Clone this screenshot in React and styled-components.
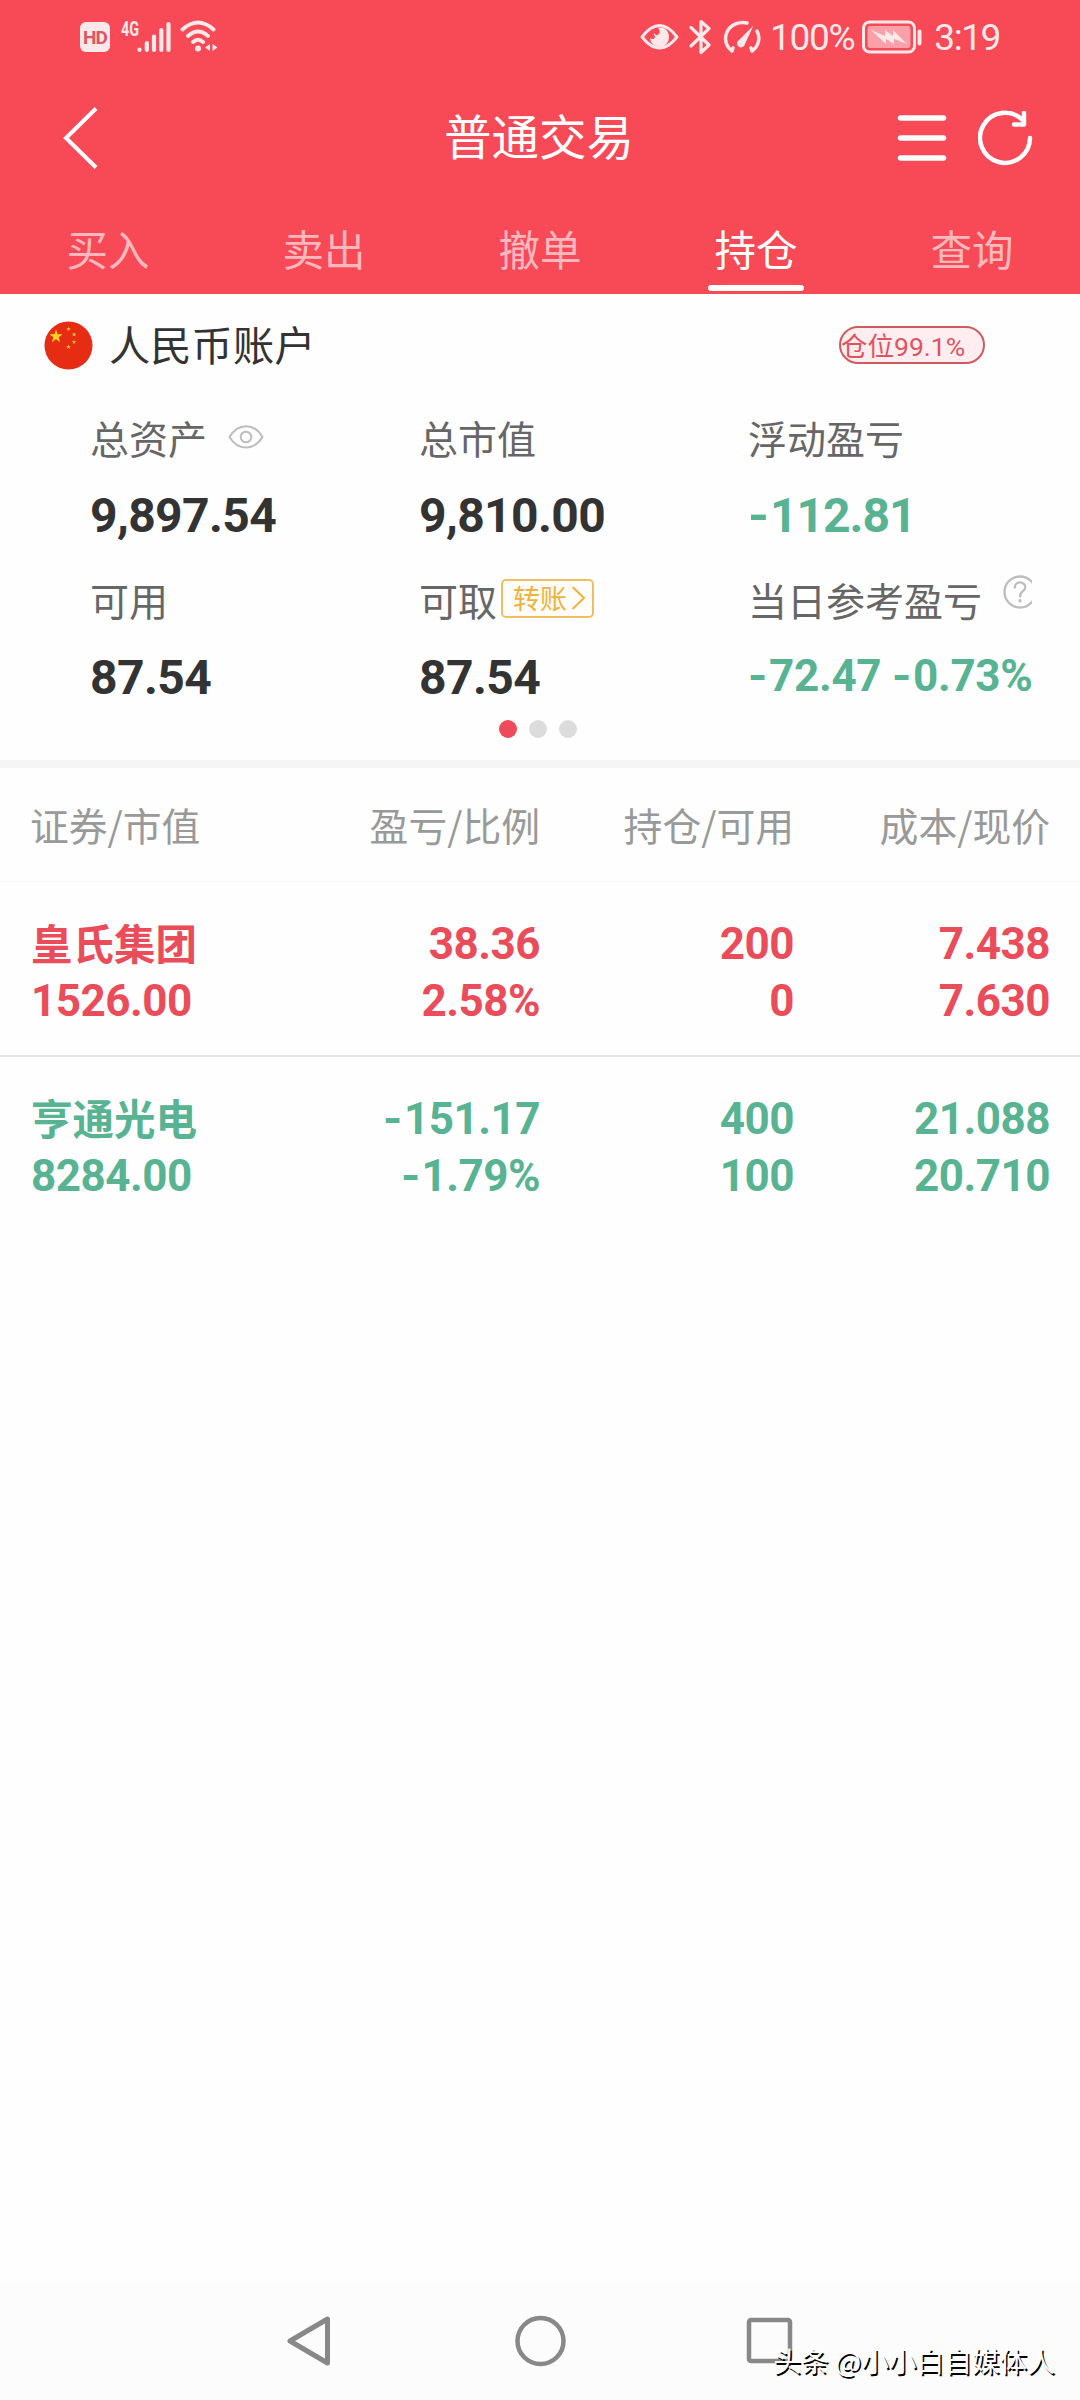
import React from "react";
import styled, { createGlobalStyle } from "styled-components";

const cjk = `"Noto Sans CJK SC", "Noto Sans", sans-serif`;
const latin = `Roboto, "Noto Sans CJK SC", sans-serif`;
const RED = "#ea4c5a";
const GREEN = "#57b391";

const GlobalStyle = createGlobalStyle`
  * { box-sizing: border-box; }
  body { margin: 0; background: #fefefe; font-family: ${cjk}; }
  svg { display: block; flex: none; }
`;

const Screen = styled.div`
  width: 1080px;
  height: 2400px;
  display: flex;
  flex-direction: column;
  background: #fefefe;
  overflow: hidden;
`;

const TopArea = styled.header`
  height: 294px;
  background: #f74956;
  color: #fff;
`;

const StatusBar = styled.div`
  height: 76px;
  padding: 0 80px 4px 80px;
  display: flex;
  align-items: center;
  color: #ffe8ea;
`;

const HdBadge = styled.span`
  width: 30px;
  height: 30px;
  margin: 2px 11px 0 0;
  border-radius: 6px;
  background: #ffe8ea;
  color: #dd5562;
  font: 700 19px/31px ${latin};
  letter-spacing: -1px;
  text-align: center;
`;

const NetworkType = styled.span`
  width: 16px;
  margin-top: -15px;
  font: 700 20px/18px ${latin};
  transform: scaleX(0.72);
  transform-origin: left;
`;

const IconGroup = styled.div`
  display: flex;
  align-items: center;
  gap: 9px;
  margin-top: 1px;
`;

const StatusRight = styled.div`
  margin-left: auto;
  display: flex;
  align-items: center;
`;

const StatusIcon = styled.span`
  margin: 1px ${(p) => p.$after || 0}px 0 0;
`;

const StatusText = styled.span`
  font: 400 37px/40px ${latin};
  letter-spacing: ${(p) => p.$spacing || 0}px;
  margin-top: 4px;
  margin-right: ${(p) => p.$after || 0}px;
`;

const TitleBar = styled.div`
  height: 124px;
  display: grid;
  grid-template-columns: 1fr 240px 1fr;
  align-items: center;
  padding: 0 46px 0 62px;
`;

const Title = styled.h1`
  margin: -7px 0 0 -18px;
  width: 240px;
  text-align: center;
  font: 400 47.5px/60px ${cjk};
  white-space: nowrap;
  justify-self: center;
`;

const Actions = styled.div`
  display: flex;
  justify-content: flex-end;
  gap: 31px;
`;

const Tabs = styled.nav`
  height: 94px;
  display: grid;
  grid-template-columns: repeat(5, 1fr);
`;

const Tab = styled.div`
  display: flex;
  flex-direction: column;
  align-items: center;
  justify-content: space-between;
  padding: 18px 0 3px;
  color: ${(p) => (p.$active ? "#fff" : "#ffb8be")};
  font: 400 41.5px/60px ${cjk};
  &::after {
    content: "";
    width: 96px;
    height: 6px;
    border-radius: 3px;
    background: ${(p) => (p.$active ? "#fff" : "transparent")};
  }
`;

const Summary = styled.section`
  height: 466px;
  display: flex;
  flex-direction: column;
`;

const AccountRow = styled.div`
  height: 102px;
  padding: 0 95px 0 44px;
  display: flex;
  align-items: center;
`;

const AccountName = styled.span`
  margin: -4px auto 0 16px;
  color: #333;
  font: 400 41.3px/56px ${cjk};
`;

const PositionBadge = styled.span`
  width: 146px;
  height: 38px;
  border: 2px solid #cf5a60;
  border-radius: 19px;
  background: #ffedef;
  color: #e2525f;
  font: 400 26.5px/37px ${latin};
  white-space: nowrap;
`;

const Metrics = styled.div`
  display: grid;
  grid-template-columns: 329px 329px 284px;
  padding-left: 90px;
  row-gap: 6px;
`;

const Metric = styled.div`
  height: 156px;
  overflow: hidden;
`;

const MetricLabel = styled.div`
  height: 83px;
  display: flex;
  align-items: center;
  color: #666;
  font: 400 39px/56px ${cjk};
  white-space: nowrap;
`;

const LabelText = styled.span`
  margin-top: -1px;
`;

const MetricValue = styled.div`
  height: 73px;
  color: ${(p) => p.$color || "#333"};
  font: 700 ${(p) => p.$size || 48}px/${(p) => (p.$size ? 70 : 74)}px ${latin};
  letter-spacing: ${(p) => p.$spacing ?? -0.6}px;
  white-space: nowrap;
`;

const EyeSlot = styled.span`
  margin: -1px 0 0 21px;
`;

const HelpSlot = styled.span`
  margin: -15px 0 0 21px;
`;

const TransferButton = styled.button`
  width: 93px;
  height: 39px;
  margin: -3px 0 0 4px;
  padding: 0 6px 0 10px;
  display: flex;
  align-items: center;
  justify-content: space-between;
  border: 2px solid #f0be62;
  border-radius: 5px;
  background: #fffdf9;
  color: #edb33c;
  font: 400 27px/32px ${cjk};
`;

const Dots = styled.div`
  display: flex;
  justify-content: center;
  gap: 12px;
  margin: 6px 4px 0 0;
`;

const Dot = styled.i`
  width: 18px;
  height: 18px;
  border-radius: 50%;
  background: ${(p) => (p.$active ? "#ef4a5a" : "#dcdcdc")};
`;

const Divider = styled.div`
  height: 8px;
  background: #f5f5f5;
`;

const row = `
  display: grid;
  grid-template-columns: 255px 254px 254px 256px;
  padding: 0 30px 0 31px;
`;

const TableHead = styled.div`
  ${row}
  height: 114px;
  align-items: center;
  border-bottom: 1px solid #fafafa;
  color: #999;
  font: 400 38.8px/56px ${cjk};
`;

const HeadCell = styled.span`
  margin: -1px 0 0 ${(p) => (p.$left ? "-1px" : 0)};
  text-align: ${(p) => (p.$left ? "left" : "right")};
  white-space: nowrap;
`;

const Holding = styled.div`
  ${row}
  height: 175px;
  padding-top: 34px;
  border-bottom: 2px solid ${(p) => (p.$last ? "transparent" : "#e6e6e6")};
  color: ${(p) => p.$color};
`;

const Pair = styled.div`
  display: flex;
  flex-direction: column;
  align-items: ${(p) => (p.$left ? "flex-start" : "flex-end")};
  font: 700 44px/57px ${latin};
  letter-spacing: -0.5px;
`;

const StockName = styled.span`
  font: 700 41.5px/57px ${cjk};
  letter-spacing: 0;
  margin-top: -2px;
  margin-bottom: 2px;
`;

const Minus = styled.span`
  display: inline-block;
  transform: scaleX(1.12);
  transform-origin: left;
  margin-right: 4px;
`;

const NavBar = styled.footer`
  height: 118px;
  margin-top: auto;
  padding: 0 284px 0 285px;
  display: flex;
  align-items: center;
  justify-content: space-between;
  background: #fcfcfc;
  position: relative;
`;

const Watermark = styled.span`
  position: absolute;
  right: 25px;
  bottom: 20px;
  color: #fff;
  font: 400 27.7px/40px ${cjk};
  text-shadow: 1.5px 1.5px 0 #000;
  white-space: nowrap;
`;

const Signal = () => (
  <svg width="34" height="32" viewBox="0 0 34 32" stroke="currentColor" strokeWidth="4.2" strokeLinecap="round">
    <path d="M2.5 28.5v.5M9.8 22v7M17 15.500v13.500M24.300 9v20M31.500 3v26" />
  </svg>
);

const Wifi = () => (
  <svg width="40" height="34" viewBox="0 0 40 34" fill="none" stroke="currentColor" strokeWidth="4" strokeLinecap="round">
    <path d="M2.500 9.500Q18 -4.500 33.500 9.500M8 16Q18 7 28 16M13 22Q18 17.500 23 22" />
    <circle cx="18" cy="28.500" r="3" fill="currentColor" stroke="none" />
    <path d="M30 24v7l-5-3.500zM32.500 24v7l5-3.500z" fill="currentColor" stroke="none" />
  </svg>
);

const EyeProtect = () => (
  <svg width="39" height="28" viewBox="0 0 39 28">
    <path d="M2 14Q19.500-9 37 14Q19.500 36 2 14z" fill="none" stroke="currentColor" strokeWidth="3" strokeLinejoin="round" />
    <path d="M18 5c6-2 11 3 11 9a9.500 9.500 0 0 1-19 1c2 2 5 1 5-1 0-2-2-2-1-4 1 2 3 3 5 1 1-2 1-4-1-6z" fill="currentColor" />
  </svg>
);

const Bluetooth = () => (
  <svg width="22" height="36" viewBox="0 0 22 36" fill="none" stroke="currentColor" strokeWidth="3.200" strokeLinecap="round" strokeLinejoin="round">
    <path d="M2 8.500L20 26l-8 7.500V2.500L20 9.500L2 27" />
  </svg>
);

const Gauge = () => (
  <svg width="38" height="34" viewBox="0 0 38 34" fill="none" stroke="currentColor" strokeWidth="3.500" strokeLinecap="round">
    <path d="M9 31A17 16 0 0 1 24 3M34 11A17 16 0 0 1 29 31M9 31l1-3M29 31l-1-3" />
    <path d="M30.500 5.500L22 24a4 4 0 1 1-6-4z" fill="currentColor" stroke="none" />
  </svg>
);

const Battery = () => (
  <svg width="60" height="34" viewBox="0 0 60 34">
    <rect x="1.500" y="2" width="51" height="30" rx="6" fill="none" stroke="currentColor" strokeWidth="3" />
    <rect x="5.500" y="6" width="43" height="22" rx="3" fill="#fba0a8" />
    <path d="M9 10l14 6 0-6 8 6 0-6 14 14-13-5 0 5-8-5 0 5z" fill="currentColor" />
    <path d="M57.500 11.500v12" stroke="currentColor" strokeWidth="4" strokeLinecap="round" />
  </svg>
);

const BackIcon = () => (
  <svg width="38" height="64" viewBox="0 0 38 64" fill="none" stroke="#fff" strokeWidth="4">
    <path d="M34 2.500L4 32l30 29.500" />
  </svg>
);

const MenuIcon = () => (
  <svg width="50" height="56" viewBox="0 0 50 56" stroke="#fff" strokeWidth="5.500" strokeLinecap="round">
    <path d="M3.500 8h43M3.500 28h43M3.500 48h43" />
  </svg>
);

const RefreshIcon = () => (
  <svg width="56" height="56" viewBox="0 0 56 56" fill="none" stroke="#fff" strokeWidth="4.500" strokeLinecap="round" strokeLinejoin="round">
    <path d="M52 28A25 25 0 1 1 44.500 10" />
    <path d="M46 3v11.500h-10" />
  </svg>
);

const starPoints = (cx, cy, r) =>
  Array.from({ length: 10 }, (_, i) => {
    const a = (Math.PI / 5) * i - Math.PI / 2;
    const d = i % 2 ? r * 0.4 : r;
    return `${cx + d * Math.cos(a)},${cy + d * Math.sin(a)}`;
  }).join(" ");

const Flag = () => (
  <svg width="49" height="49" viewBox="0 0 49 49">
    <circle cx="24.500" cy="24.500" r="24" fill="#e72c14" />
    <g fill="#ffd21c">
      <polygon points={starPoints(12, 15.500, 7)} />
      <polygon points={starPoints(24.500, 8, 2.300)} />
      <polygon points={starPoints(30, 13.500, 2.300)} />
      <polygon points={starPoints(30, 21, 2.300)} />
      <polygon points={starPoints(24.500, 26, 2.300)} />
    </g>
  </svg>
);

const EyeIcon = () => (
  <svg width="36" height="26" viewBox="0 0 36 26" fill="none" stroke="#bdbdbd" strokeWidth="2">
    <path d="M1.500 13C10-1.500 26-1.500 34.500 13C26 27 10 27 1.500 13z" strokeLinejoin="round" />
    <circle cx="18" cy="13" r="5.300" />
  </svg>
);

const HelpIcon = () => (
  <svg width="34" height="34" viewBox="0 0 34 34" fill="none" stroke="#bdbdbd" strokeWidth="2.300">
    <circle cx="17" cy="17" r="15.500" />
    <path d="M11.800 12.500C12 5.500 22.500 6 22.300 12.500C22.200 16 17 16 17 21.500" strokeLinecap="round" />
    <circle cx="17" cy="25.800" r="1.700" fill="#bdbdbd" stroke="none" />
  </svg>
);

const ChevronIcon = () => (
  <svg width="15" height="26" viewBox="0 0 15 26" fill="none" stroke="currentColor" strokeWidth="2">
    <path d="M1.500 2L13 13L1.500 24" />
  </svg>
);

const Amount = ({ value }) =>
  value.startsWith("-") ? (
    <span>
      <Minus>-</Minus>
      {value.slice(1)}
    </span>
  ) : (
    <span>{value}</span>
  );

const tabs = ["买入", "卖出", "撤单", "持仓", "查询"];

const heads = ["证券/市值", "盈亏/比例", "持仓/可用", "成本/现价"];

const holdings = [
  {
    name: "皇氏集团",
    value: "1526.00",
    color: RED,
    cells: [["38.36", "2.58%"], ["200", "0"], ["7.438", "7.630"]],
  },
  {
    name: "亨通光电",
    value: "8284.00",
    color: GREEN,
    cells: [["-151.17", "-1.79%"], ["400", "100"], ["21.088", "20.710"]],
  },
];

const PhoneStatus = () => (
  <StatusBar>
    <HdBadge>HD</HdBadge>
    <NetworkType>4G</NetworkType>
    <IconGroup>
      <Signal />
      <Wifi />
    </IconGroup>
    <StatusRight>
      <StatusIcon $after={10}><EyeProtect /></StatusIcon>
      <StatusIcon $after={12}><Bluetooth /></StatusIcon>
      <StatusIcon $after={9}><Gauge /></StatusIcon>
      <StatusText $after={8} $spacing={-1.3}>100%</StatusText>
      <StatusIcon $after={12}><Battery /></StatusIcon>
      <StatusText $spacing={-1.4}>3:19</StatusText>
    </StatusRight>
  </StatusBar>
);

export default function App() {
  return (
    <Screen>
      <GlobalStyle />
      <TopArea>
        <PhoneStatus />
        <TitleBar>
          <BackIcon />
          <Title>普通交易</Title>
          <Actions>
            <MenuIcon />
            <RefreshIcon />
          </Actions>
        </TitleBar>
        <Tabs>
          {tabs.map((t) => (
            <Tab key={t} $active={t === "持仓"}>{t}</Tab>
          ))}
        </Tabs>
      </TopArea>

      <Summary>
        <AccountRow>
          <Flag />
          <AccountName>人民币账户</AccountName>
          <PositionBadge>仓位99.1%</PositionBadge>
        </AccountRow>
        <Metrics>
          <Metric>
            <MetricLabel>
              <LabelText>总资产</LabelText>
              <EyeSlot><EyeIcon /></EyeSlot>
            </MetricLabel>
            <MetricValue>9,897.54</MetricValue>
          </Metric>
          <Metric>
            <MetricLabel><LabelText>总市值</LabelText></MetricLabel>
            <MetricValue>9,810.00</MetricValue>
          </Metric>
          <Metric>
            <MetricLabel><LabelText>浮动盈亏</LabelText></MetricLabel>
            <MetricValue $color={GREEN} $spacing={-1}><Amount value="-112.81" /></MetricValue>
          </Metric>
          <Metric>
            <MetricLabel><LabelText>可用</LabelText></MetricLabel>
            <MetricValue>87.54</MetricValue>
          </Metric>
          <Metric>
            <MetricLabel>
              <LabelText>可取</LabelText>
              <TransferButton>转账<ChevronIcon /></TransferButton>
            </MetricLabel>
            <MetricValue>87.54</MetricValue>
          </Metric>
          <Metric>
            <MetricLabel>
              <LabelText>当日参考盈亏</LabelText>
              <HelpSlot><HelpIcon /></HelpSlot>
            </MetricLabel>
            <MetricValue $color={GREEN} $size={44} $spacing={-0.3}>
              <Amount value="-72.47" /> <Amount value="-0.73%" />
            </MetricValue>
          </Metric>
        </Metrics>
        <Dots>
          <Dot $active />
          <Dot />
          <Dot />
        </Dots>
      </Summary>

      <Divider />

      <TableHead>
        {heads.map((h, i) => (
          <HeadCell key={h} $left={i === 0}>{h}</HeadCell>
        ))}
      </TableHead>
      {holdings.map((h, i) => (
        <Holding key={h.name} $color={h.color} $last={i === holdings.length - 1}>
          <Pair $left>
            <StockName>{h.name}</StockName>
            <span>{h.value}</span>
          </Pair>
          {h.cells.map(([a, b]) => (
            <Pair key={a}>
              <Amount value={a} />
              <Amount value={b} />
            </Pair>
          ))}
        </Holding>
      ))}

      <NavBar>
        <svg width="48" height="56" viewBox="0 0 48 56" fill="none" stroke="#888" strokeWidth="5" strokeLinejoin="round">
          <path d="M42.500 6v44L5 28z" />
        </svg>
        <svg width="52" height="56" viewBox="0 0 52 56" fill="none" stroke="#888" strokeWidth="4.500">
          <circle cx="26.500" cy="28" r="23" />
        </svg>
        <svg width="50" height="56" viewBox="0 0 50 56" fill="none" stroke="#888" strokeWidth="4.500">
          <rect x="3" y="7" width="41" height="41" rx="2" />
        </svg>
        <Watermark>头条 @小小白自媒体人</Watermark>
      </NavBar>
    </Screen>
  );
}
